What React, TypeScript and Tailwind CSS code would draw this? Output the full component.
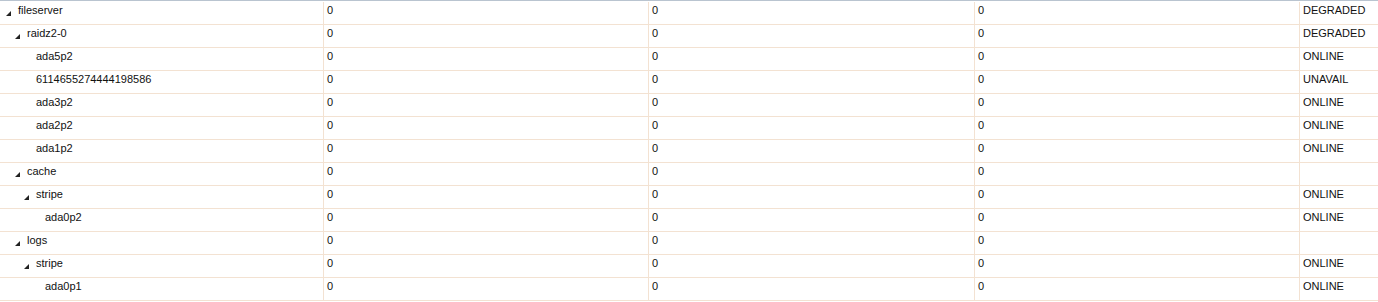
import React from 'react';

type Row = {
  name: string;
  level: number;
  expandable: boolean;
  read: string;
  write: string;
  cksum: string;
  state: string;
};

const rows: Row[] = [
  { name: 'fileserver', level: 0, expandable: true, read: '0', write: '0', cksum: '0', state: 'DEGRADED' },
  { name: 'raidz2-0', level: 1, expandable: true, read: '0', write: '0', cksum: '0', state: 'DEGRADED' },
  { name: 'ada5p2', level: 2, expandable: false, read: '0', write: '0', cksum: '0', state: 'ONLINE' },
  { name: '6114655274444198586', level: 2, expandable: false, read: '0', write: '0', cksum: '0', state: 'UNAVAIL' },
  { name: 'ada3p2', level: 2, expandable: false, read: '0', write: '0', cksum: '0', state: 'ONLINE' },
  { name: 'ada2p2', level: 2, expandable: false, read: '0', write: '0', cksum: '0', state: 'ONLINE' },
  { name: 'ada1p2', level: 2, expandable: false, read: '0', write: '0', cksum: '0', state: 'ONLINE' },
  { name: 'cache', level: 1, expandable: true, read: '0', write: '0', cksum: '0', state: '' },
  { name: 'stripe', level: 2, expandable: true, read: '0', write: '0', cksum: '0', state: 'ONLINE' },
  { name: 'ada0p2', level: 3, expandable: false, read: '0', write: '0', cksum: '0', state: 'ONLINE' },
  { name: 'logs', level: 1, expandable: true, read: '0', write: '0', cksum: '0', state: '' },
  { name: 'stripe', level: 2, expandable: true, read: '0', write: '0', cksum: '0', state: 'ONLINE' },
  { name: 'ada0p1', level: 3, expandable: false, read: '0', write: '0', cksum: '0', state: 'ONLINE' },
];

function Expander() {
  return (
    <svg width="5" height="5" viewBox="0 0 5 5" className="shrink-0 mt-[9px]">
      <polygon points="0,5 5,5 5,0" fill="#222" />
    </svg>
  );
}

const indents = ['w-0', 'w-[9px]', 'w-[18px]', 'w-[27px]'];

export default function App() {
  return (
    <div
      className="w-[1378px] bg-white text-[11px] text-[#111] border-t border-[#b9c4d0] pt-px"
      style={{ fontFamily: '"Liberation Sans", Arial, sans-serif' }}
    >
      {rows.map((r, i) => (
        <div
          key={i}
          className="grid grid-cols-[324px_325px_326px_325px_1fr] h-[23px] border-b border-[#f3e2d2] leading-[16px]"
        >
          <div className="flex items-start pl-[6px] border-r border-[#f3e2d2]">
            <div className={indents[r.level]} />
            {r.expandable ? <Expander /> : <div className="w-[5px]" />}
            <span className="ml-[7px]">{r.name}</span>
          </div>
          <div className="pl-[3px] border-r border-[#f3e2d2]">{r.read}</div>
          <div className="pl-[3px] border-r border-[#f3e2d2]">{r.write}</div>
          <div className="pl-[3px] border-r border-[#f3e2d2]">{r.cksum}</div>
          <div className="pl-[3px]">{r.state}</div>
        </div>
      ))}
    </div>
  );
}
